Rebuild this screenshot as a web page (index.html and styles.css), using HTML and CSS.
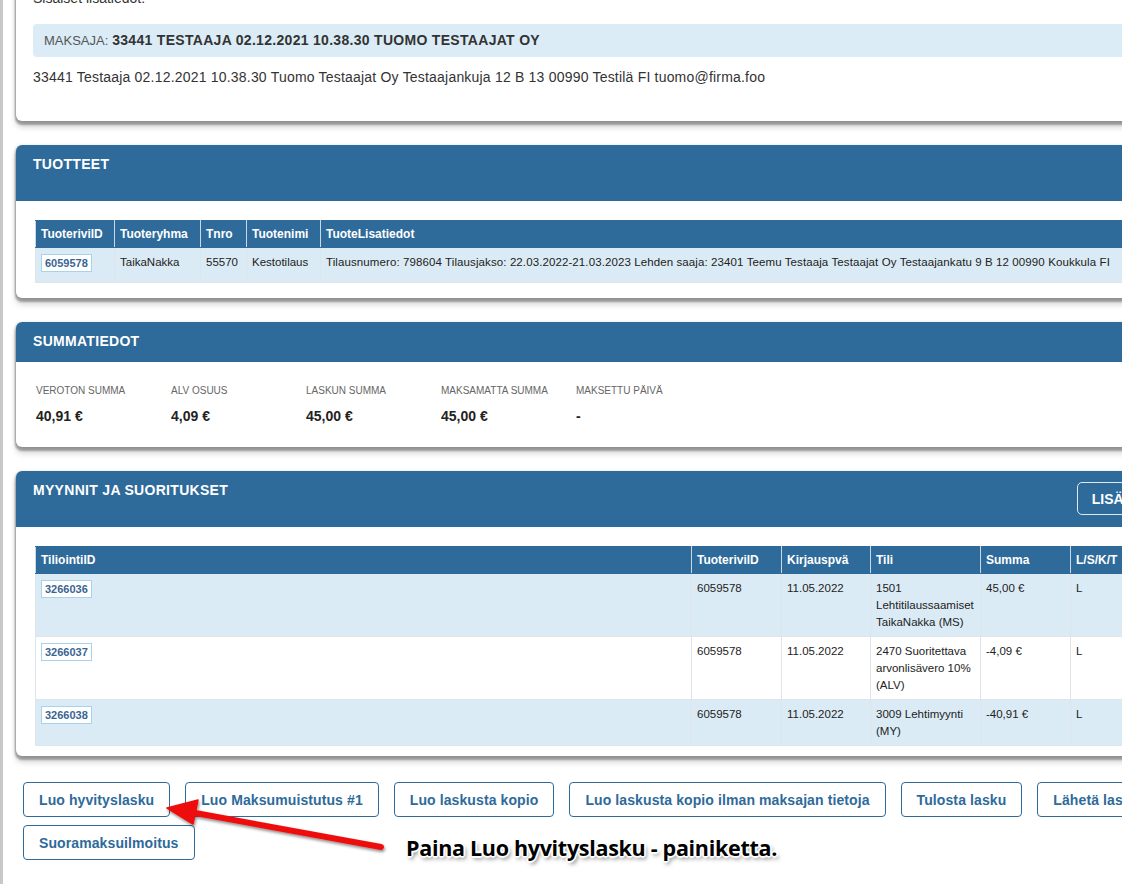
FILE: index.html
```
<!DOCTYPE html>
<html lang="fi">
<head>
<meta charset="utf-8">
<title>Lasku</title>
<link rel="stylesheet" href="styles.css">
</head>
<body>
<div class="page">
  <main class="content">
    <section class="card card-info">
      <p class="note">Sisäiset lisätiedot:</p>
      <div class="payer"><span class="payer-label">MAKSAJA:</span> <strong>33441 TESTAAJA 02.12.2021 10.38.30 TUOMO TESTAAJAT OY</strong></div>
      <p class="address">33441 Testaaja 02.12.2021 10.38.30 Tuomo Testaajat Oy Testaajankuja 12 B 13 00990 Testilä FI tuomo@firma.foo</p>
    </section>

    <section class="card">
      <header class="card-head"><h2>TUOTTEET</h2></header>
      <div class="card-body">
        <table class="grid">
          <colgroup>
            <col class="c79"><col class="c86"><col class="c46"><col class="c74"><col>
          </colgroup>
          <thead>
            <tr><th>TuoterivilD</th><th>Tuoteryhma</th><th>Tnro</th><th>Tuotenimi</th><th>TuoteLisatiedot</th></tr>
          </thead>
          <tbody>
            <tr class="odd">
              <td><span class="badge">6059578</span></td>
              <td>TaikaNakka</td>
              <td>55570</td>
              <td>Kestotilaus</td>
              <td class="nowrap">Tilausnumero: 798604 Tilausjakso: 22.03.2022-21.03.2023 Lehden saaja: 23401 Teemu Testaaja Testaajat Oy Testaajankatu 9 B 12 00990 Koukkula FI</td>
            </tr>
          </tbody>
        </table>
      </div>
    </section>

    <section class="card">
      <header class="card-head card-head-short"><h2>SUMMATIEDOT</h2></header>
      <div class="summary">
        <div class="sum-item"><div class="sum-label">VEROTON SUMMA</div><div class="sum-value">40,91 €</div></div>
        <div class="sum-item"><div class="sum-label">ALV OSUUS</div><div class="sum-value">4,09 €</div></div>
        <div class="sum-item"><div class="sum-label">LASKUN SUMMA</div><div class="sum-value">45,00 €</div></div>
        <div class="sum-item"><div class="sum-label">MAKSAMATTA SUMMA</div><div class="sum-value">45,00 €</div></div>
        <div class="sum-item"><div class="sum-label">MAKSETTU PÄIVÄ</div><div class="sum-value">-</div></div>
      </div>
    </section>

    <section class="card">
      <header class="card-head"><h2>MYYNNIT JA SUORITUKSET</h2><button class="btn-head" type="button">LISÄÄ SUORITUS</button></header>
      <div class="card-body card-body-sales">
        <table class="grid">
          <colgroup>
            <col class="c656"><col class="c90"><col class="c89"><col class="c110"><col class="c90"><col>
          </colgroup>
          <thead>
            <tr><th>TiliointiID</th><th>TuoterivilD</th><th>Kirjauspvä</th><th>Tili</th><th>Summa</th><th>L/S/K/T</th></tr>
          </thead>
          <tbody>
            <tr class="odd">
              <td><span class="badge">3266036</span></td>
              <td>6059578</td>
              <td>11.05.2022</td>
              <td>1501 Lehtitilaussaamiset TaikaNakka (MS)</td>
              <td>45,00 €</td>
              <td>L</td>
            </tr>
            <tr>
              <td><span class="badge">3266037</span></td>
              <td>6059578</td>
              <td>11.05.2022</td>
              <td>2470 Suoritettava arvonlisävero 10% (ALV)</td>
              <td>-4,09 €</td>
              <td>L</td>
            </tr>
            <tr class="odd">
              <td><span class="badge">3266038</span></td>
              <td>6059578</td>
              <td>11.05.2022</td>
              <td>3009 Lehtimyynti (MY)</td>
              <td>-40,91 €</td>
              <td>L</td>
            </tr>
          </tbody>
        </table>
      </div>
    </section>

    <div class="actions">
      <button class="btn" type="button">Luo hyvityslasku</button>
      <button class="btn" type="button">Luo Maksumuistutus #1</button>
      <button class="btn" type="button">Luo laskusta kopio</button>
      <button class="btn" type="button">Luo laskusta kopio ilman maksajan tietoja</button>
      <button class="btn" type="button">Tulosta lasku</button>
      <button class="btn" type="button">Lähetä lasku</button>
      <button class="btn" type="button">Suoramaksuilmoitus</button>
    </div>
  </main>

  <svg class="arrow" width="1122" height="884" viewBox="0 0 1122 884" aria-hidden="true">
    <defs>
      <filter id="arrowShadow" x="-20%" y="-100%" width="140%" height="300%">
        <feDropShadow dx="1" dy="2" stdDeviation="1.5" flood-color="#000" flood-opacity="0.45"/>
      </filter>
    </defs>
    <g filter="url(#arrowShadow)">
      <line x1="381" y1="847" x2="190" y2="812" stroke="#ee1111" stroke-width="6" stroke-linecap="round"/>
      <polygon points="167,808 198,800 193,824" fill="#ee1111" stroke="#ee1111" stroke-width="1.5" stroke-linejoin="round"/>
    </g>
  </svg>
  <p class="callout">Paina Luo hyvityslasku - painiketta.</p>
</div>
</body>
</html>
```

FILE: styles.css
```
html, body {
  margin: 0;
  padding: 0;
}

body {
  font-family: "Liberation Sans", Arial, sans-serif;
  color: #333;
  background: #fff;
  overflow: hidden;
}

.page {
  position: relative;
  width: 1122px;
  height: 884px;
  overflow: hidden;
  box-sizing: border-box;
  border-left: 3px solid #c8c8c8;
}

.content {
  width: 1226px;
  margin: -22px 0 0 13px;
}

.card {
  background: #fff;
  border-radius: 6px;
  overflow: hidden;
  margin-bottom: 24px;
  box-shadow: 0 3px 2px 1px rgba(0, 0, 0, 0.28), 0 6px 6px rgba(0, 0, 0, 0.18), -1px 0 3px rgba(0, 0, 0, 0.12);
}

.card-info {
  padding: 10px 17px 34px;
}

.note {
  margin: 0 0 16px;
  font-size: 14px;
  line-height: 20px;
}

.payer {
  background: #dbecf6;
  border-radius: 4px;
  padding: 8px 11px;
  font-size: 14px;
  line-height: 17px;
}

.payer-label {
  font-size: 13px;
  color: #555;
}

.payer strong {
  color: #333;
  letter-spacing: 0.3px;
}

.address {
  margin: 10px 0 0;
  font-size: 14px;
  line-height: 20px;
  letter-spacing: 0.2px;
}

.card-head {
  background: #2e6a9a;
  color: #fff;
  height: 56px;
  box-sizing: border-box;
  padding: 9px 17px 0;
  display: flex;
  justify-content: space-between;
  align-items: flex-start;
}

.card-head-short {
  height: 40px;
}

.card-head h2 {
  margin: 0;
  font-size: 14px;
  line-height: 20px;
  font-weight: bold;
  letter-spacing: 0.3px;
}

.btn-head {
  margin-top: 2px;
  height: 33px;
  padding: 0 14px;
  border: 1px solid rgba(255, 255, 255, 0.85);
  border-radius: 5px;
  background: transparent;
  color: #fff;
  font: bold 14px "Liberation Sans", Arial, sans-serif;
}

.card-body {
  padding: 19px 19px 15px;
}

.card-body-sales {
  padding-bottom: 10px;
}

.grid {
  width: 100%;
  border-collapse: collapse;
  table-layout: fixed;
  font-size: 11.5px;
  line-height: 17px;
  color: #222;
}

.c79 { width: 79px; }
.c86 { width: 86px; }
.c46 { width: 46px; }
.c74 { width: 74px; }
.c656 { width: 656px; }
.c90 { width: 90px; }
.c89 { width: 89px; }
.c110 { width: 110px; }

.grid th {
  background: #2e6a9a;
  color: #fff;
  text-align: left;
  font-size: 12px;
  font-weight: bold;
  padding: 5px 5px 4px;
  border: 1px solid #c9d8e5;
  border-top-color: #2e6a9a;
  border-bottom-color: #2e6a9a;
  white-space: nowrap;
  overflow: hidden;
}

.grid td {
  padding: 6px 5px 5px;
  vertical-align: top;
  border: 1px solid #dde4ea;
}

.grid tr.odd td {
  background: #dbebf5;
}

.nowrap {
  white-space: nowrap;
  overflow: hidden;
  letter-spacing: 0.1px;
}

.badge {
  display: inline-block;
  vertical-align: top;
  margin-bottom: 5px;
  padding: 1px 3px;
  line-height: 14px;
  font-size: 11px;
  font-weight: bold;
  color: #3a6593;
  background: #fff;
  border: 1px solid #a9d2ee;
}

.summary {
  display: grid;
  grid-template-columns: repeat(5, 135px);
  padding: 22px 20px 21px;
}

.sum-label {
  font-size: 10px;
  line-height: 14px;
  color: #666;
  margin-bottom: 8px;
  white-space: nowrap;
}

.sum-value {
  font-size: 14px;
  line-height: 20px;
  font-weight: bold;
  color: #222;
}

.actions {
  width: 1212px;
  margin: 26px 0 0 7px;
  display: flex;
  flex-wrap: wrap;
  gap: 8px 15px;
}

.btn {
  height: 35px;
  padding: 0 15px;
  background: #fff;
  color: #2e6a9a;
  border: 1px solid #2e6a9a;
  border-radius: 4px;
  font: bold 14px "Liberation Sans", Arial, sans-serif;
  letter-spacing: 0.1px;
  white-space: nowrap;
}

.arrow {
  position: absolute;
  left: -3px;
  top: 0;
  pointer-events: none;
}

.callout {
  position: absolute;
  left: 403px;
  top: 834px;
  margin: 0;
  font-family: "Open Sans", Lato, sans-serif;
  font-weight: bold;
  font-size: 21.5px;
  line-height: 28px;
  letter-spacing: -0.3px;
  color: #000;
  white-space: nowrap;
  text-shadow: -1px -1px 0 #fff, 1px -1px 0 #fff, -1px 1px 0 #fff, 1px 1px 0 #fff, 0 -2px 1px #fff, 0 2px 1px #fff, -2px 0 1px #fff, 2px 0 1px #fff, 2px 3px 4px rgba(0, 0, 0, 0.55);
}
```
